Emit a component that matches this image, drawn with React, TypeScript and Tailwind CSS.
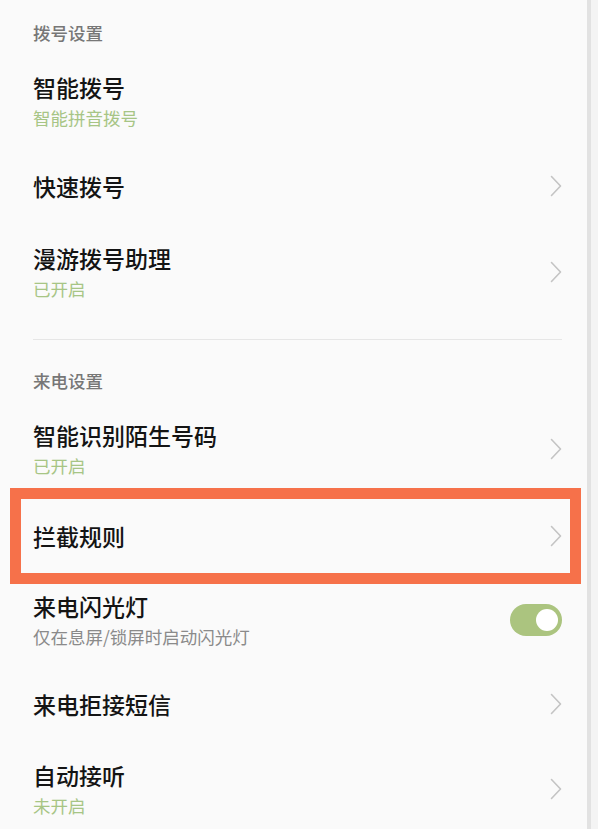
// @ts-nocheck
const font = { fontFamily: '"Noto Sans CJK SC", "Noto Sans", sans-serif' };

function Chevron() {
  return (
    <svg width="12" height="22" viewBox="0 0 12 22" fill="none" className="shrink-0">
      <path d="M1.5 1.5 L10.5 11 L1.5 20.5" stroke="#c4c4c4" strokeWidth="1.6" strokeLinecap="round" strokeLinejoin="round" />
    </svg>
  );
}

function Toggle() {
  return (
    <div className="w-[52px] h-[32px] rounded-full bg-[#abc47f] flex items-center justify-end pr-[4px] shrink-0">
      <div className="w-[22px] h-[22px] rounded-full bg-white"></div>
    </div>
  );
}

function Texts({ title, sub, subColor }) {
  return (
    <div className="flex flex-col">
      <div className="text-[23px] leading-[30px] font-medium text-[#141414]">{title}</div>
      {sub && (
        <div className={"text-[17.5px] leading-[24px] mt-[4px] " + (subColor === "gray" ? "text-[#8a8a8a]" : "text-[#a7c585]")}>
          {sub}
        </div>
      )}
    </div>
  );
}

function Row({ title, sub, subColor, h, right = "chevron" }) {
  return (
    <div className={"flex items-center justify-between pl-[33px] pr-[25px] " + h}>
      <Texts title={title} sub={sub} subColor={subColor} />
      {right === "chevron" && <Chevron />}
      {right === "toggle" && <Toggle />}
    </div>
  );
}

function Header({ children, cls }) {
  return (
    <div className={"pl-[33px] text-[17.5px] leading-[22px] font-medium text-[#777777] " + cls}>{children}</div>
  );
}

export default function App() {
  return (
    <div className="w-[598px] h-[829px] overflow-hidden bg-[#fafafa] flex" style={font}>
      <div className="flex-1 flex flex-col">
        <Header cls="h-[56px] pt-[22px]">拨号设置</Header>
        <Row title="智能拨号" sub="智能拼音拨号" h="h-[90px]" right="none" />
        <Row title="快速拨号" h="h-[80px]" />
        <Row title="漫游拨号助理" sub="已开启" h="h-[92px]" />
        <div className="h-[21px]"></div>
        <div className="ml-[33px] mr-[25px] h-[1px] bg-[#e6e6e6]"></div>
        <Header cls="h-[70px] pt-[30px]">来电设置</Header>
        <Row title="智能识别陌生号码" sub="已开启" h="h-[78px]" />
        <div className="ml-[10px] w-[571px] h-[96px] border-[11px] border-[#f6714a] flex items-center justify-between pl-[12px] pr-[8px]">
          <div className="text-[23px] leading-[30px] font-medium text-[#141414]">拦截规则</div>
          <Chevron />
        </div>
        <Row title="来电闪光灯" sub="仅在息屏/锁屏时启动闪光灯" subColor="gray" h="h-[72px]" right="toggle" />
        <Row title="来电拒接短信" h="h-[96px]" />
        <Row title="自动接听" sub="未开启" h="h-[74px]" />
      </div>
      <div className="w-[4px] bg-[#e2e2e2]"></div>
      <div className="w-[7px] bg-[#f4f4f4]"></div>
    </div>
  );
}
